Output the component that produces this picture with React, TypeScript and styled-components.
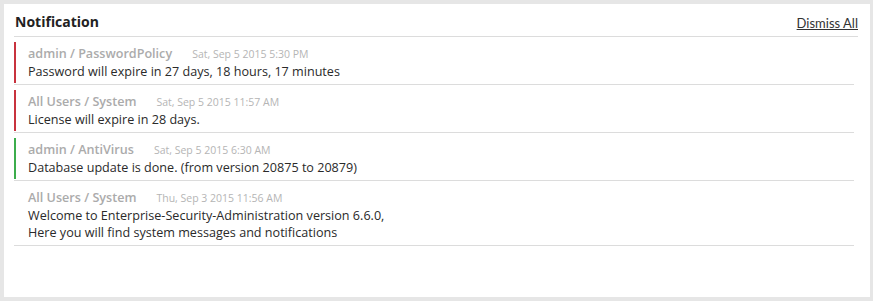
import styled, { createGlobalStyle } from 'styled-components';

const GlobalStyle = createGlobalStyle`
  html, body {
    margin: 0;
    padding: 0;
    background: #e6e6e6;
    font-family: "Open Sans", "Liberation Sans", sans-serif;
  }
`

const Page = styled.div`
  padding: 4px 3px 4px 4px;
  height: 301px;
  box-sizing: border-box;
`

const Panel = styled.div`
  background: #ffffff;
  height: 100%;
  padding: 0 12px 0 10px;
  box-sizing: border-box;
`

const Header = styled.div`
  display: flex;
  align-items: flex-end;
  justify-content: space-between;
  height: 33px;
  padding: 0 0 0 1px;
  border-bottom: 1px solid #dcdcdc;
  box-sizing: border-box;
`

const Title = styled.h2`
  margin: 0 0 5px 0;
  font-size: 14px;
  font-weight: 700;
  color: #222;
`

const DismissLink = styled.a`
  margin-bottom: 5px;
  font-family: Lato, "Open Sans", sans-serif;
  font-size: 13px;
  color: #333;
  text-decoration: underline;
  cursor: pointer;
`

const List = styled.div`
  display: flex;
  flex-direction: column;
  margin-right: 4px;
`

const Item = styled.div`
  padding: 5px 0 1px 0;
  border-bottom: 1px solid #dcdcdc;
`

const ItemBody = styled.div<{ $accent?: string }>`
  border-left: 2px solid ${p => p.$accent ?? 'transparent'};
  padding: 3px 0 3px 12px;
`

const Meta = styled.div`
  display: flex;
  align-items: baseline;
  gap: 20px;
  height: 18px;
  line-height: 18px;
`

const Source = styled.span`
  font-size: 12.6px;
  font-weight: 600;
  color: #ababab;
`

const Stamp = styled.span`
  font-size: 10.5px;
  color: #b5b5b5;
`

const Message = styled.div`
  font-size: 12.6px;
  height: 17px;
  line-height: 17px;
  color: #2a2a2a;
`

type Note = {
  source: string
  time: string
  lines: string[]
  accent?: string
}

const notes: Note[] = [
  {
    source: 'admin / PasswordPolicy',
    time: 'Sat, Sep 5 2015 5:30 PM',
    lines: ['Password will expire in 27 days, 18 hours, 17 minutes'],
    accent: '#c8323e',
  },
  {
    source: 'All Users / System',
    time: 'Sat, Sep 5 2015 11:57 AM',
    lines: ['License will expire in 28 days.'],
    accent: '#c8323e',
  },
  {
    source: 'admin / AntiVirus',
    time: 'Sat, Sep 5 2015 6:30 AM',
    lines: ['Database update is done. (from version 20875 to 20879)'],
    accent: '#3cad4c',
  },
  {
    source: 'All Users / System',
    time: 'Thu, Sep 3 2015 11:56 AM',
    lines: [
      'Welcome to Enterprise-Security-Administration version 6.6.0,',
      'Here you will find system messages and notifications',
    ],
  },
]

export default function App() {
  return (
    <Page>
      <GlobalStyle />
      <Panel>
        <Header>
          <Title>Notification</Title>
          <DismissLink>Dismiss All</DismissLink>
        </Header>
        <List>
          {notes.map((n, i) => (
            <Item key={i}>
              <ItemBody $accent={n.accent}>
                <Meta>
                  <Source>{n.source}</Source>
                  <Stamp>{n.time}</Stamp>
                </Meta>
                {n.lines.map((l, j) => (
                  <Message key={j}>{l}</Message>
                ))}
              </ItemBody>
            </Item>
          ))}
        </List>
      </Panel>
    </Page>
  )
}
